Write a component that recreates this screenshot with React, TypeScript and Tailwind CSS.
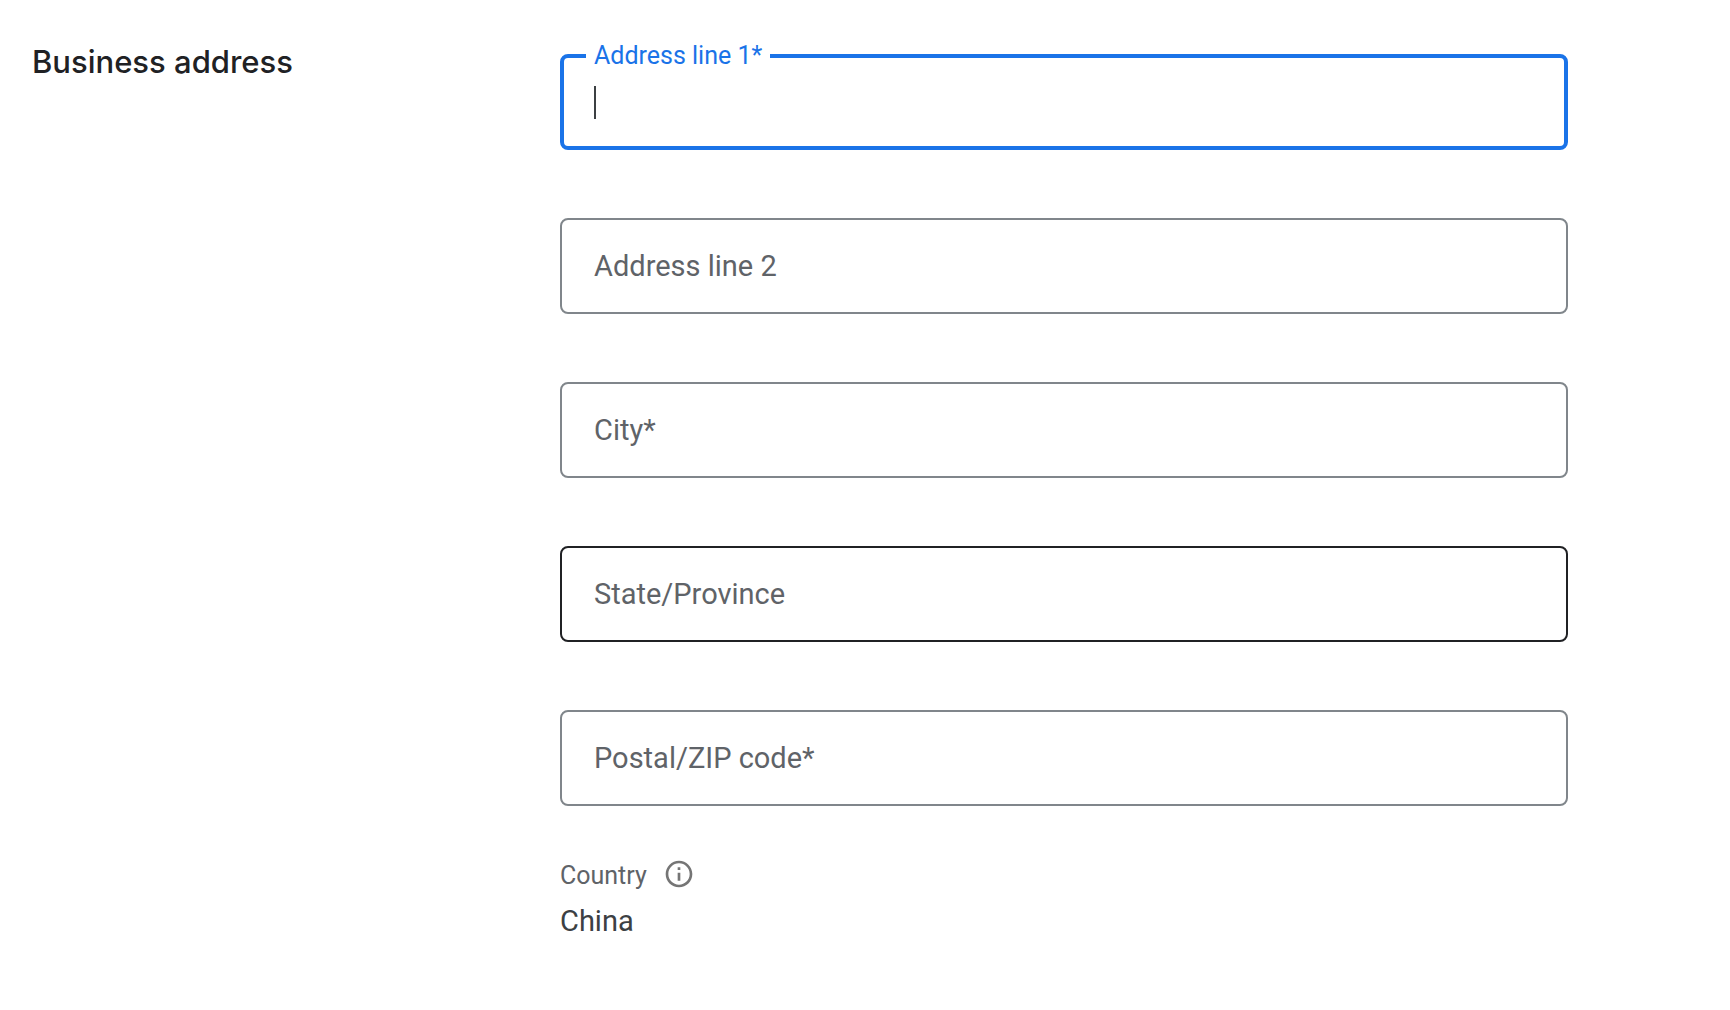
import { useState } from "react";
import { MdInfoOutline } from "react-icons/md";

type FieldId = "address1" | "address2" | "city" | "state" | "postal";

const fields: { id: FieldId; label: string; required?: boolean }[] = [
  { id: "address1", label: "Address line 1", required: true },
  { id: "address2", label: "Address line 2" },
  { id: "city", label: "City", required: true },
  { id: "state", label: "State/Province" },
  { id: "postal", label: "Postal/ZIP code", required: true },
];

type TextFieldProps = {
  id: string;
  label: string;
  required?: boolean;
  focused: boolean;
  hovered: boolean;
  onFocusChange: (on: boolean) => void;
  onHoverChange: (on: boolean) => void;
};

function TextField({ id, label, required, focused, hovered, onFocusChange, onHoverChange }: TextFieldProps) {
  const [value, setValue] = useState("");
  const floating = focused || value !== "";
  const border = focused
    ? "border-4 border-[#1a73e8] px-[30px]"
    : hovered
      ? "border-2 border-[#202124] px-8"
      : "border-2 border-[#80868b] px-8";
  const labelPlace = floating ? "top-0.5 text-[25px]" : "top-1/2 text-[29px]";
  const labelColor = focused ? "text-[#1a73e8]" : "text-[#5f6368]";
  return (
    <div
      className="relative"
      onMouseEnter={() => onHoverChange(true)}
      onMouseLeave={() => onHoverChange(false)}
    >
      <input
        id={id}
        type="text"
        value={value}
        autoFocus={focused}
        required={required}
        onChange={(e) => setValue(e.target.value)}
        onFocus={() => onFocusChange(true)}
        onBlur={() => onFocusChange(false)}
        className={`block h-24 w-full rounded-lg bg-white text-[29px] text-[#3c4043] outline-none ${border} ${
          value === "" ? "caret-transparent" : "caret-[#3c4043]"
        }`}
      />
      <label
        htmlFor={id}
        className={`pointer-events-none absolute left-[26px] -translate-y-1/2 bg-white px-2 leading-8 whitespace-nowrap ${labelPlace} ${labelColor}`}
      >
        {label}
        {required && "*"}
      </label>
      {focused && value === "" && (
        <span aria-hidden="true" className="pointer-events-none absolute top-8 left-[34px] h-[33px] w-0.5 bg-[#3c4043]" />
      )}
    </div>
  );
}

export default function App() {
  const [focused, setFocused] = useState<FieldId | null>("address1");
  const [hovered, setHovered] = useState<FieldId | null>("state");
  return (
    <main className="min-h-screen bg-white font-['Roboto',sans-serif]">
      <form className="flex pt-[54px] pr-[162px] pl-8" onSubmit={(e) => e.preventDefault()}>
        <div className="w-[528px] shrink-0">
          <h2 className="-mt-3 font-['Inter',sans-serif] text-[31px] leading-10 font-medium text-[#202124]">
            Business address
          </h2>
        </div>
        <div className="min-w-0 flex-1">
          <div className="flex flex-col gap-[68px]">
            {fields.map((f) => (
              <TextField
                key={f.id}
                id={f.id}
                label={f.label}
                required={f.required}
                focused={focused === f.id}
                hovered={hovered === f.id}
                onFocusChange={(on) => setFocused(on ? f.id : null)}
                onHoverChange={(on) => setHovered(on ? f.id : null)}
              />
            ))}
          </div>
          <dl className="mt-[52px]">
            <dt className="flex items-start gap-4 text-[25px] leading-9 text-[#5f6368]">
              Country
              <button type="button" aria-label="About country" className="text-[#757575]">
                <MdInfoOutline size={32} aria-hidden="true" />
              </button>
            </dt>
            <dd className="mt-2 text-[29px] leading-[38px] text-[#3c4043]">China</dd>
          </dl>
        </div>
      </form>
    </main>
  );
}
